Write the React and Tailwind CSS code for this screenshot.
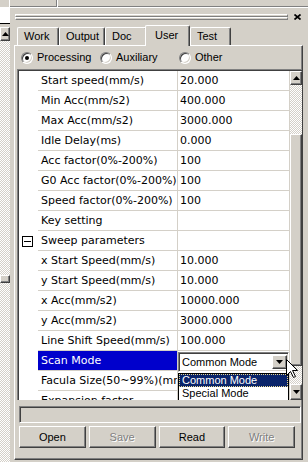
const raised =
  'border border-t-white border-l-white border-r-[#404040] border-b-[#404040] shadow-[inset_-1px_-1px_0_#808080]';
const sunken =
  'border border-t-[#808080] border-l-[#808080] border-r-white border-b-white shadow-[inset_1px_1px_0_#404040,inset_-1px_-1px_0_#d4d0c8]';
const dither =
  'bg-[image:repeating-conic-gradient(#ffffff_0_25%,#d4d0c8_0_50%)] bg-[length:2px_2px]';

const rows = [
  { name: 'Start speed(mm/s)', value: '20.000' },
  { name: 'Min Acc(mm/s2)', value: '400.000' },
  { name: 'Max Acc(mm/s2)', value: '3000.000' },
  { name: 'Idle Delay(ms)', value: '0.000' },
  { name: 'Acc factor(0%-200%)', value: '100' },
  { name: 'G0 Acc factor(0%-200%)', value: '100' },
  { name: 'Speed factor(0%-200%)', value: '100' },
  { name: 'Key setting', value: '' },
  { name: 'Sweep parameters', value: '', group: true },
  { name: 'x Start Speed(mm/s)', value: '10.000' },
  { name: 'y Start Speed(mm/s)', value: '10.000' },
  { name: 'x Acc(mm/s2)', value: '10000.000' },
  { name: 'y Acc(mm/s2)', value: '3000.000' },
  { name: 'Line Shift Speed(mm/s)', value: '100.000' },
  { name: 'Scan Mode', value: '', selected: true },
  { name: 'Facula Size(50~99%)(mm)', value: '' },
  { name: 'Expansion factor', value: '' },
];

const tabs = [
  { label: 'Work', w: 'w-[42px]' },
  { label: 'Output', w: 'w-[46px]' },
  { label: 'Doc', w: 'w-[42px]' },
  { label: 'User', w: 'w-[45px]', active: true },
  { label: 'Test', w: 'w-[41px]' },
];

const Arrow = ({ up }) => (
  <svg width="7" height="4" viewBox="0 0 7 4">
    <path d={up ? 'M3.5 0 L7 4 L0 4 Z' : 'M0 0 L7 0 L3.5 4 Z'} fill="#000" />
  </svg>
);

const Radio = ({ label, checked }) => (
  <div className="w-[79px] flex items-center gap-[4px]">
    <div className={`w-[12px] h-[12px] rounded-full bg-white flex items-center justify-center ${sunken}`}>
      {checked && <div className="w-[4px] h-[4px] rounded-full bg-black" />}
    </div>
    <span>{label}</span>
  </div>
);

const ComboBox = () => (
  <div className="absolute left-0 top-[1px] w-[111px] z-20 font-['Liberation_Sans',sans-serif] leading-none">
    <div className={`h-[20px] bg-white flex items-center ${sunken}`}>
      <span className="flex-1 pl-[3px]">Common Mode</span>
      <div className={`w-[15px] h-[14px] mr-[1px] bg-[#d4d0c8] flex items-center justify-center ${raised}`}>
        <Arrow />
      </div>
    </div>
    <div className="mt-px h-[28px] bg-white border border-black flex flex-col">
      <div className="h-[13px] bg-[#0a246a] text-white border border-dotted border-[#e8d890] flex items-center pl-[2px]">
        Common Mode
      </div>
      <div className="h-[13px] flex items-center pl-[3px]">Special Mode</div>
    </div>
  </div>
);

const Row = ({ row }) => (
  <div className="flex h-[20px] shrink-0">
    <div className="w-[19px] shrink-0 bg-white flex items-center pl-[3px]">
      {row.group && (
        <div className="w-[11px] h-[11px] border border-black bg-white flex items-center justify-center">
          <div className="w-[7px] h-px bg-black" />
        </div>
      )}
    </div>
    <div
      className={`w-[139px] shrink-0 border-b border-[#d4d0c8] pl-[3px] leading-[19px] whitespace-nowrap overflow-hidden ${
        row.selected ? 'bg-[#0000cc] text-white' : 'bg-white'
      }`}
    >
      {row.name}
    </div>
    <div className="w-px shrink-0 bg-[#d4d0c8]" />
    <div className="relative w-[111px] shrink-0 bg-white border-b border-[#d4d0c8] pl-[2px] leading-[19px] whitespace-nowrap">
      {row.value}
      {row.selected && <ComboBox />}
    </div>
    <div className="w-px shrink-0 bg-[#d4d0c8]" />
  </div>
);

const Button = ({ label, disabled }) => (
  <div
    className={`h-[22px] bg-[#d4d0c8] flex items-center justify-center ${raised} ${
      disabled ? 'text-[#808080] [text-shadow:1px_1px_0_#ffffff]' : 'text-black'
    }`}
  >
    {label}
  </div>
);

export default function App() {
  return (
    <div className="relative w-[308px] h-[462px] bg-[#d4d0c8] flex overflow-hidden text-[11px] text-black font-['Liberation_Sans',sans-serif] select-none">
      {/* neighbouring pane */}
      <div className="w-[10px] shrink-0 flex flex-col">
        <div className="h-[7px] border-r border-white" />
        <div className="h-[17px] bg-white border-b border-black" />
        <div className="h-[3px]" />
        <div className={`h-[14px] bg-[#d4d0c8] flex items-center justify-center ${raised}`}>
          <Arrow up />
        </div>
        <div className={`flex-1 ${dither} flex flex-col`}>
          <div className="h-[234px]" />
          <div className={`h-[8px] bg-[#d4d0c8] ${raised}`} />
        </div>
      </div>

      <div className="flex-1 flex flex-col">
        {/* top strip */}
        <div className="h-[8px] flex border-b border-white shadow-[inset_0_-1px_0_#808080]">
          <div className="w-[47px] border-r border-[#808080]" />
          <div className="flex-1 border-l border-white" />
        </div>

        {/* caption gripper */}
        <div className="h-[17px] flex items-center pl-[5px] pr-[7px] gap-[6px]">
          <div className="flex-1 flex flex-col">
            <div className="h-[3px] border-t border-white border-b border-b-[#808080] border-l border-l-white border-r border-r-[#808080]" />
            <div className="h-[3px] border-t border-white border-b border-b-[#808080] border-l border-l-white border-r border-r-[#808080]" />
          </div>
          <svg width="7" height="6" viewBox="0 0 7 6">
            <path d="M0.5 0.5 L6.5 5.5 M6.5 0.5 L0.5 5.5" stroke="#000" strokeWidth="1.7" />
          </svg>
        </div>

        {/* tabs */}
        <div className="h-[20px] flex items-end pl-[7px]">
          {tabs.map((t) => (
            <div
              key={t.label}
              className={`${t.w} shrink-0 bg-[#d4d0c8] flex items-center border-t border-l border-white border-r border-r-[#404040] rounded-t-[2px] shadow-[inset_-1px_0_0_#808080] ${
                t.active ? 'h-[21px] -ml-[2px] -mb-px relative z-10 pl-[9px] pb-[2px]' : 'h-[18px] pl-[6px]'
              }`}
            >
              {t.label}
            </div>
          ))}
        </div>

        {/* tab page */}
        <div className="flex-1 ml-[4px] mr-[5px] mb-[2px] flex flex-col border-t border-l border-white border-r border-b border-r-[#404040] border-b-[#404040] shadow-[inset_-1px_-1px_0_#808080] pl-[2px]">
          <div className="h-[23px] flex items-center pl-[4px]">
            <Radio label="Processing" checked />
            <Radio label="Auxiliary" />
            <Radio label="Other" />
          </div>

          {/* property grid */}
          <div className="h-[331px] w-[285px] flex border-t border-l border-[#808080] shadow-[inset_1px_1px_0_#404040] pt-px pl-px font-['DejaVu_Sans',sans-serif]">
            <div className="w-[271px] flex flex-col overflow-hidden">
              {rows.map((r) => (
                <Row key={r.name} row={r} />
              ))}
            </div>
            <div className="w-[12px] flex flex-col">
              <div className={`h-[14px] bg-[#d4d0c8] flex items-center justify-center ${raised}`}>
                <Arrow up />
              </div>
              <div className={`h-[49px] ${dither}`} />
              <div className={`h-[232px] bg-[#d4d0c8] ${raised}`} />
              <div className={`flex-1 ${dither}`} />
              <div className={`h-[16px] bg-[#d4d0c8] flex items-center justify-center ${raised}`}>
                <Arrow />
              </div>
            </div>
          </div>

          <div className={`mt-[6px] ml-[2px] mr-[1px] h-[17px] bg-[#d4d0c8] ${sunken}`} />

          <div className="mt-[3px] ml-[2px] w-[276px] grid grid-cols-4 gap-[3px]">
            <Button label="Open" />
            <Button label="Save" disabled />
            <Button label="Read" />
            <Button label="Write" disabled />
          </div>
        </div>
      </div>

      {/* mouse pointer */}
      <svg className="absolute left-[286px] top-[359px] z-30" width="13" height="20" viewBox="0 0 13 20">
        <path
          d="M0.5 0.5 V16.5 L4.5 12.5 L7.5 18.5 L9.5 17.5 L6.5 11.5 H11.5 Z"
          fill="#fff"
          stroke="#000"
          strokeWidth="1"
          strokeLinejoin="miter"
        />
      </svg>
    </div>
  );
}
